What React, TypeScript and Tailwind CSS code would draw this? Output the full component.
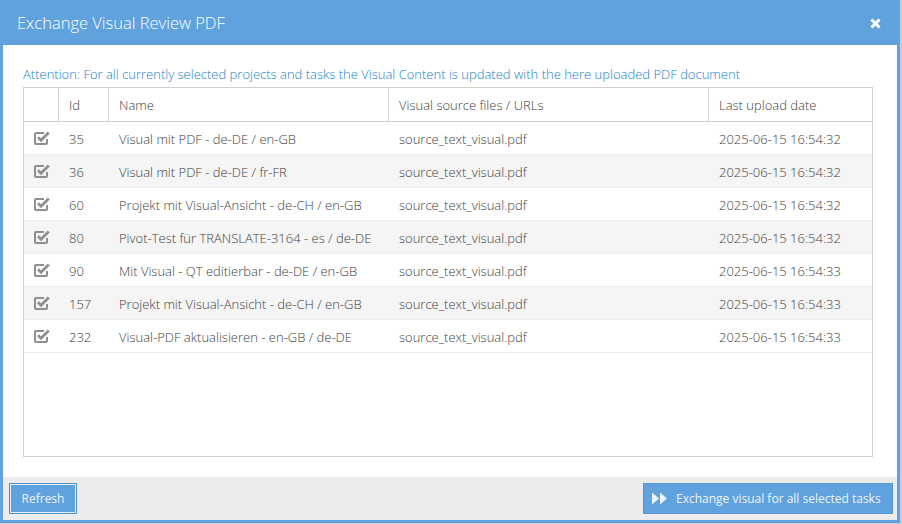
import { Fragment } from 'react'

type Row = {
  id: number
  name: string
  file: string
  date: string
}

const rows: Array<Row> = [
  { id: 35, name: 'Visual mit PDF - de-DE / en-GB', file: 'source_text_visual.pdf', date: '2025-06-15 16:54:32' },
  { id: 36, name: 'Visual mit PDF - de-DE / fr-FR', file: 'source_text_visual.pdf', date: '2025-06-15 16:54:32' },
  { id: 60, name: 'Projekt mit Visual-Ansicht - de-CH / en-GB', file: 'source_text_visual.pdf', date: '2025-06-15 16:54:32' },
  { id: 80, name: 'Pivot-Test für TRANSLATE-3164 - es / de-DE', file: 'source_text_visual.pdf', date: '2025-06-15 16:54:32' },
  { id: 90, name: 'Mit Visual - QT editierbar - de-DE / en-GB', file: 'source_text_visual.pdf', date: '2025-06-15 16:54:33' },
  { id: 157, name: 'Projekt mit Visual-Ansicht - de-CH / en-GB', file: 'source_text_visual.pdf', date: '2025-06-15 16:54:33' },
  { id: 232, name: 'Visual-PDF aktualisieren - en-GB / de-DE', file: 'source_text_visual.pdf', date: '2025-06-15 16:54:33' },
]

const cols = 'grid grid-cols-[35px_50px_280px_320px_1fr]'

function CheckIcon() {
  return (
    <svg width="17" height="15" viewBox="0 0 17 15" fill="none">
      <path
        d="M13 9v4a1 1 0 0 1-1 1H2a1 1 0 0 1-1-1V4a1 1 0 0 1 1-1h8"
        stroke="#8f8f8f"
        strokeWidth="2"
      />
      <path d="M4 7.2l3 3 7.8-7.8" stroke="#8f8f8f" strokeWidth="2.8" />
    </svg>
  )
}

function App() {
  return (
    <div className="w-[902px] h-[524px] bg-[#c5cfd8] font-['Open_Sans',sans-serif] font-light">
      <div className="w-[900px] h-[523px] bg-[#5fa2dd] flex flex-col">
        <div className="h-[45px] shrink-0 flex items-center justify-between pl-[17px] pr-[19px] pt-[1px]">
          <div className="text-white text-[16.5px] leading-none">Exchange Visual Review PDF</div>
          <svg width="11" height="11" viewBox="0 0 11 11">
            <path d="M1.5 1.5l8 8M9.5 1.5l-8 8" stroke="#fff" strokeWidth="3" />
          </svg>
        </div>
        <div className="flex-1 flex flex-col px-[3px] pb-[3px]">
          <div className="flex-1 bg-white pt-[21px] pl-[20px] pr-[24px] pb-[20px] flex flex-col">
            <div className="text-[13px] leading-[16px] text-[#157fcc] mb-[5px]">
              Attention: For all currently selected projects and tasks the Visual Content is updated with the here uploaded PDF document
            </div>
            <div className="flex-1 border border-[#d0d0d0] text-[13px] text-[#404040]">
              <div className={`${cols} h-[34px] border-b border-[#d0d0d0]`}>
                <div className="border-r border-[#d0d0d0]" />
                <div className="border-r border-[#d0d0d0] pl-[10px] pt-[2px] flex items-center">Id</div>
                <div className="border-r border-[#d0d0d0] pl-[10px] pt-[2px] flex items-center">Name</div>
                <div className="border-r border-[#d0d0d0] pl-[10px] pt-[2px] flex items-center">Visual source files / URLs</div>
                <div className="pl-[10px] pt-[2px] flex items-center">Last upload date</div>
              </div>
              {rows.map((r, i) => (
                <div
                  key={r.id}
                  className={`${cols} h-[33px] border-b border-[#ededed] ${i % 2 === 1 ? 'bg-[#f5f5f5]' : 'bg-white'}`}
                >
                  <Fragment>
                    <div className="flex items-center justify-center pl-[1px] pb-[2px]">
                      <CheckIcon />
                    </div>
                    <div className="pl-[10px] pt-[3px] flex items-center">{r.id}</div>
                    <div className="pl-[10px] pt-[3px] flex items-center">{r.name}</div>
                    <div className="pl-[10px] pt-[3px] flex items-center">{r.file}</div>
                    <div className="pl-[10px] pt-[3px] flex items-center">{r.date}</div>
                  </Fragment>
                </div>
              ))}
            </div>
          </div>
          <div className="h-[43px] shrink-0 bg-[#ececec] flex items-center justify-between pl-[6px] pr-[4px]">
            <button className="h-[31px] w-[68px] bg-[#5fa2dd] border border-[#4a8fd0] shadow-[inset_0_0_0_1px_#e8f1fa] text-[12px] font-normal text-[#eef4fb] whitespace-nowrap">
              Refresh
            </button>
            <button className="h-[31px] w-[250px] bg-[#5fa2dd] border border-[#5699d6] flex items-center pl-[7px] gap-[8px] text-[12px] font-normal text-[#eef4fb] whitespace-nowrap">
              <svg width="17" height="13" viewBox="0 0 17 13">
                <path d="M1 0.5l7 6-7 6z M9 0.5l7 6-7 6z" fill="#eef4fb" />
              </svg>
              Exchange visual for all selected tasks
            </button>
          </div>
        </div>
      </div>
    </div>
  )
}

export default App
